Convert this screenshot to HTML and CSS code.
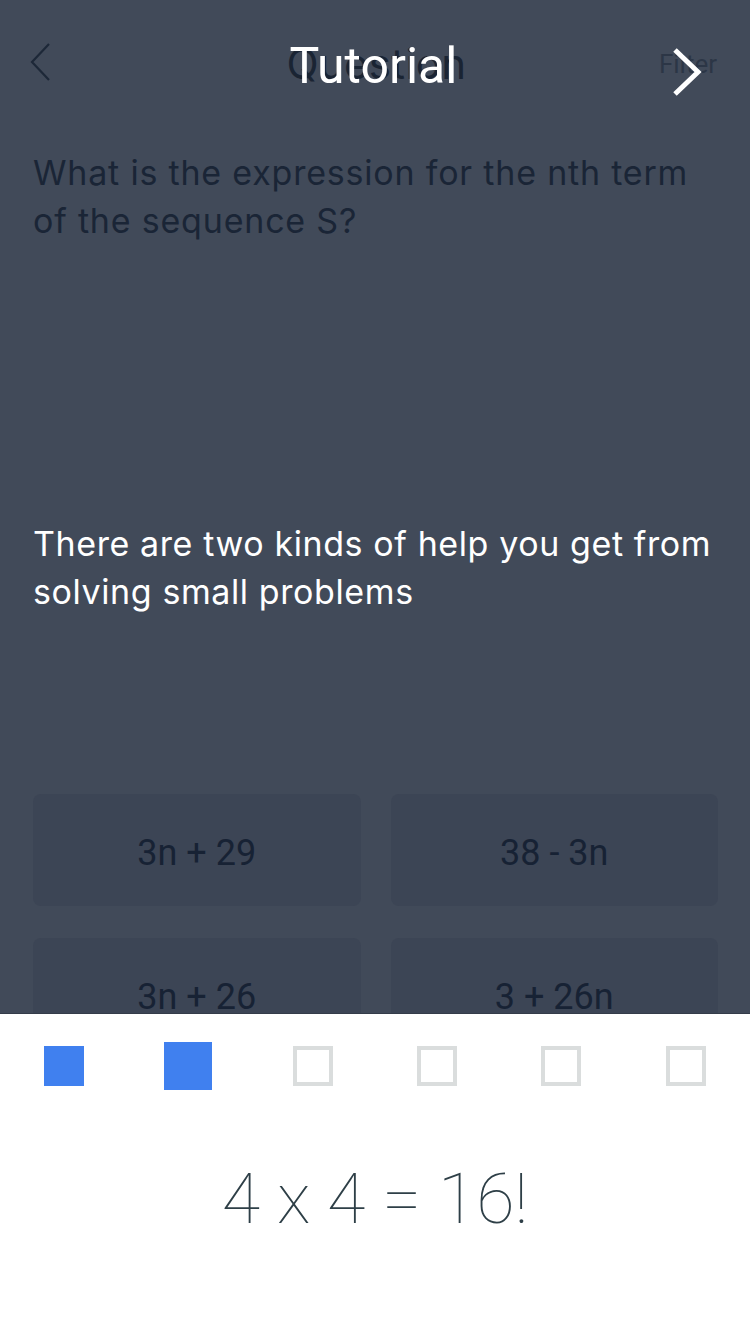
FILE: index.html
```html
<!DOCTYPE html>
<html lang="en">
<head>
<meta charset="utf-8">
<title>Tutorial</title>
<link rel="stylesheet" href="styles.css">
</head>
<body>
<div class="screen">
  <div class="page">
    <header class="nav">
      <svg class="back" width="22" height="40" viewBox="0 0 22 40"><polyline points="19,1 2,19 19,37" fill="none" stroke="#1d2838" stroke-width="2.2"/></svg>
      <h1 class="title title-under">Question</h1>
      <span class="filter">Filter</span>
    </header>
    <p class="question">What is the expression for the nth term of the sequence S?</p>
    <div class="answers">
      <div class="answer">3n + 29</div>
      <div class="answer">38 - 3n</div>
      <div class="answer">3n + 26</div>
      <div class="answer">3 + 26n</div>
    </div>
  </div>
  <div class="overlay">
    <header class="nav nav-over">
      <span></span>
      <h1 class="title title-over">Tutorial</h1>
      <svg class="next" width="36" height="50" viewBox="0 0 36 50"><polyline points="4,2 27,24 4,46" fill="none" stroke="#ffffff" stroke-width="5"/></svg>
    </header>
    <p class="tip">There are two kinds of help you get from solving small problems</p>
    <div class="panel">
      <div class="steps">
        <span class="step done"></span>
        <span class="step current"></span>
        <span class="step"></span>
        <span class="step"></span>
        <span class="step"></span>
        <span class="step"></span>
      </div>
      <p class="equation">4 x 4 = 16!</p>
    </div>
  </div>
</div>
</body>
</html>
```
FILE: styles.css
```css
html, body {
  margin: 0;
  padding: 0;
}
body {
  font-family: Roboto, "Liberation Sans", sans-serif;
  background: #414a59;
}
.screen {
  position: relative;
  width: 750px;
  height: 1334px;
  overflow: hidden;
  background: #414a59;
}
.page {
  display: flex;
  flex-direction: column;
}
.nav {
  height: 130px;
  display: grid;
  grid-template-columns: 1fr auto 1fr;
  align-items: start;
  padding: 0 33px 0 30px;
}
.back {
  margin-top: 43px;
}
.title {
  margin: 41px 0 0;
  font-size: 50px;
  line-height: 50px;
  font-weight: 400;
}
.title-under {
  font-family: Inter, Roboto, sans-serif;
  font-size: 42px;
  line-height: 50px;
  margin-top: 39px;
  margin-left: 6px;
  letter-spacing: 0.3px;
  color: #1a2433;
}
.filter {
  justify-self: end;
  margin-top: 51px;
  font-size: 26px;
  line-height: 26px;
  color: #2c3646;
}
.question {
  margin: 19px 33px 0;
  font-family: Inter, Roboto, sans-serif;
  font-size: 34px;
  line-height: 48px;
  letter-spacing: 0.8px;
  color: #1a2536;
}
.answers {
  margin: 549px 32px 0 33px;
  display: grid;
  grid-template-columns: 1fr 1fr;
  column-gap: 30px;
  row-gap: 32px;
}
.answer {
  height: 112px;
  border-radius: 8px;
  background: #3c4555;
  display: flex;
  align-items: center;
  justify-content: center;
  font-size: 36px;
  color: #172234;
  padding-top: 6px;
  box-sizing: border-box;
}
.overlay {
  position: absolute;
  inset: 0;
  display: flex;
  flex-direction: column;
}
.title-over {
  color: #ffffff;
}
.next {
  justify-self: end;
  margin-top: 48px;
  margin-right: 10px;
}
.tip {
  margin: 390px 28px 0 33px;
  font-family: Inter, Roboto, sans-serif;
  font-size: 34px;
  line-height: 48px;
  letter-spacing: 0.6px;
  color: #ffffff;
}
.panel {
  margin-top: auto;
  height: 321px;
  background: #ffffff;
  border-top: 1px solid #343c49;
  box-sizing: border-box;
  padding-top: 28px;
}
.steps {
  height: 48px;
  padding: 0 2px;
  display: grid;
  grid-template-columns: repeat(6, 1fr);
  align-items: center;
  justify-items: center;
}
.step {
  width: 40px;
  height: 40px;
  box-sizing: border-box;
  border: 4px solid #dadddd;
}
.step.done {
  background: #4080ef;
  border: none;
}
.step.current {
  width: 48px;
  height: 48px;
  background: #4080ef;
  border: none;
}
.equation {
  margin: 74px 0 0;
  text-align: center;
  font-size: 70px;
  line-height: 70px;
  font-weight: 100;
  color: #2e3f47;
}
```
